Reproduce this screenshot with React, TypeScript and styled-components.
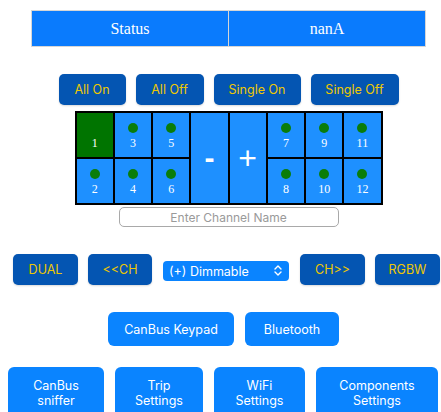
import * as React from 'react';
import styled, { createGlobalStyle } from 'styled-components';

const GlobalStyle = createGlobalStyle`
  html, body {
    margin: 0;
    padding: 0;
    background: #ffffff;
    font-family: Inter, "Noto Sans", "Liberation Sans", sans-serif;
  }
`;

const Page = styled.div`
  width: 441px;
  height: 412px;
  overflow: hidden;
  padding-top: 10px;
  box-sizing: border-box;
`;

const Centered = styled.div`
  width: 395px;
  margin-left: 31px;
  display: flex;
  flex-direction: column;
  align-items: center;
`;

const StatusBar = styled.div`
  display: flex;
  width: 395px;
  height: 37px;
  border: 1px solid #d6d6d6;
  box-sizing: border-box;
  background: #0a7bfd;
`;

const StatusCell = styled.div`
  flex: 1;
  display: flex;
  align-items: center;
  justify-content: center;
  color: #ffffff;
  font-family: "Liberation Serif", "DejaVu Serif", serif;
  font-size: 16px;
  & + & {
    border-left: 1px solid #d6d6d6;
  }
`;

const Row = styled.div<{ $top: number; $indent?: number; $gap?: number }>`
  display: flex;
  align-items: center;
  gap: ${p => p.$gap ?? 10}px;
  margin-top: ${p => p.$top}px;
  padding-left: ${p => p.$indent ?? 0}px;
`;

const DarkButton = styled.button<{ $w: number }>`
  width: ${p => p.$w}px;
  height: 31px;
  border: none;
  border-radius: 5px;
  background: #0455b2;
  color: #efc800;
  font-family: inherit;
  font-size: 12.5px;
  padding: 0;
  box-shadow: 0 1px 2px rgba(0, 0, 0, 0.15);
`;

const LightButton = styled.button<{ $w: number; $h: number }>`
  width: ${p => p.$w}px;
  height: ${p => p.$h}px;
  flex: none;
  border: none;
  border-radius: 6px;
  background: #0a84ff;
  color: #ffffff;
  font-family: inherit;
  font-size: 12.5px;
  line-height: 15px;
  padding: 0;
`;

const Grid = styled.div`
  margin-top: 6px;
  display: grid;
  grid-template-columns: repeat(8, 36.25px);
  grid-template-rows: 44px 44px;
  gap: 2px;
  padding: 2px;
  background: #000000;
`;

const Channel = styled.div<{ $col: number; $row: number; $on?: boolean }>`
  grid-column: ${p => p.$col};
  grid-row: ${p => p.$row};
  background: ${p => (p.$on ? '#007400' : '#1e90ff')};
  display: flex;
  flex-direction: column;
  align-items: center;
  padding-top: 10px;
  box-sizing: border-box;
  color: #ffffff;
  font-family: "Liberation Serif", "DejaVu Serif", serif;
  font-size: 12px;
  line-height: 14px;
`;

const Dot = styled.span<{ $hidden?: boolean }>`
  width: 10px;
  height: 10px;
  border-radius: 50%;
  background: #0a7d0a;
  visibility: ${p => (p.$hidden ? 'hidden' : 'visible')};
  margin-bottom: 3px;
`;

const Dimmer = styled.div<{ $col: number; $size: number; $weight: number }>`
  grid-column: ${p => p.$col};
  grid-row: 1 / span 2;
  background: #1e90ff;
  color: #ffffff;
  display: flex;
  align-items: center;
  justify-content: center;
  font-family: "Liberation Sans", Arial, sans-serif;
  font-size: ${p => p.$size}px;
  font-weight: ${p => p.$weight};
`;

const NameInput = styled.input`
  margin-top: 2px;
  width: 220px;
  height: 20px;
  box-sizing: border-box;
  border: 1px solid #a9a9a9;
  border-radius: 5px;
  text-align: center;
  font-family: inherit;
  font-size: 12px;
  outline: none;
  &::placeholder {
    color: #9a9a9a;
  }
`;

const SelectWrap = styled.div`
  position: relative;
  width: 126px;
  height: 20px;
  margin: 0 1px;
`;

const Select = styled.select`
  width: 100%;
  height: 100%;
  appearance: none;
  border: none;
  border-radius: 4px;
  background: #0a84ff;
  color: #ffffff;
  font-family: inherit;
  font-size: 12.5px;
  padding: 0 0 0 6px;
  outline: none;
`;

const Chevrons = styled.svg`
  position: absolute;
  right: 7px;
  top: 5px;
  pointer-events: none;
`;

const channelsTop = [1, 3, 5];
const channelsBottom = [2, 4, 6];
const rightTop = [7, 9, 11];
const rightBottom = [8, 10, 12];

export default function App() {
  const [name, setName] = React.useState('');
  const [mode, setMode] = React.useState('dim');

  return (
    <Page>
      <GlobalStyle />
      <Centered>
        <StatusBar>
          <StatusCell>Status</StatusCell>
          <StatusCell>nanA</StatusCell>
        </StatusBar>

        <Row $top={27} $gap={10}>
          <DarkButton $w={67}>All On</DarkButton>
          <DarkButton $w={68}>All Off</DarkButton>
          <DarkButton $w={87}>Single On</DarkButton>
          <DarkButton $w={88}>Single Off</DarkButton>
        </Row>

        <Grid>
          {channelsTop.map((n, i) => (
            <Channel key={n} $col={i + 1} $row={1} $on={n === 1}>
              <Dot $hidden={n === 1} />
              {n}
            </Channel>
          ))}
          {channelsBottom.map((n, i) => (
            <Channel key={n} $col={i + 1} $row={2}>
              <Dot />
              {n}
            </Channel>
          ))}
          <Dimmer $col={4} $size={30} $weight={700}>-</Dimmer>
          <Dimmer $col={5} $size={32} $weight={300}>+</Dimmer>
          {rightTop.map((n, i) => (
            <Channel key={n} $col={i + 6} $row={1}>
              <Dot />
              {n}
            </Channel>
          ))}
          {rightBottom.map((n, i) => (
            <Channel key={n} $col={i + 6} $row={2}>
              <Dot />
              {n}
            </Channel>
          ))}
        </Grid>

        <NameInput
          placeholder="Enter Channel Name"
          value={name}
          onChange={e => setName(e.target.value)}
        />
      </Centered>

      <Row $top={27} $indent={13} $gap={10}>
        <DarkButton $w={65}>DUAL</DarkButton>
        <DarkButton $w={64}>&lt;&lt;CH</DarkButton>
        <SelectWrap>
          <Select value={mode} onChange={e => setMode(e.target.value)}>
            <option value="dim">(+) Dimmable</option>
            <option value="onoff">On / Off</option>
          </Select>
          <Chevrons width="8" height="11" viewBox="0 0 8 11">
            <path d="M1 4 L4 1 L7 4 M1 7 L4 10 L7 7" fill="none" stroke="#ffffff" strokeWidth="1.4" strokeLinecap="round" strokeLinejoin="round" />
          </Chevrons>
        </SelectWrap>
        <DarkButton $w={65}>CH&gt;&gt;</DarkButton>
        <DarkButton $w={65}>RGBW</DarkButton>
      </Row>

      <Row $top={27} $indent={108} $gap={11}>
        <LightButton $w={126} $h={34}>CanBus Keypad</LightButton>
        <LightButton $w={94} $h={34}>Bluetooth</LightButton>
      </Row>

      <Row $top={21} $indent={8} $gap={11}>
        <LightButton $w={96} $h={52}>CanBus<br />sniffer</LightButton>
        <LightButton $w={88} $h={52}>Trip<br />Settings</LightButton>
        <LightButton $w={91} $h={52}>WiFi<br />Settings</LightButton>
        <LightButton $w={122} $h={52}>Components<br />Settings</LightButton>
      </Row>
    </Page>
  );
}
